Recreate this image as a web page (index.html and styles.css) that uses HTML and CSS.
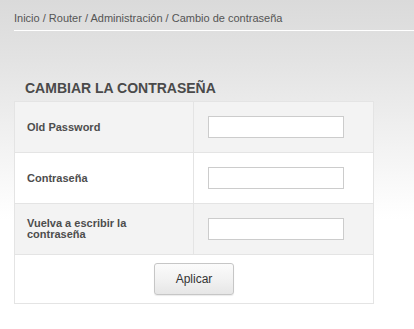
FILE: index.html
```html
<!DOCTYPE html>
<html lang="es">
<head>
<meta charset="utf-8">
<title>Cambio de contraseña</title>
<link rel="stylesheet" href="styles.css">
</head>
<body>
<div class="breadcrumb">Inicio / Router / Administración / Cambio de contraseña</div>
<main class="content">
  <h2 class="title">CAMBIAR LA CONTRASEÑA</h2>
  <form class="form-table">
    <div class="row alt">
      <label class="label" for="old">Old Password</label>
      <div class="field"><input id="old" type="password" class="input"></div>
    </div>
    <div class="row">
      <label class="label" for="new">Contraseña</label>
      <div class="field"><input id="new" type="password" class="input"></div>
    </div>
    <div class="row alt">
      <label class="label" for="rep"><span class="wrap">Vuelva a escribir la contraseña</span></label>
      <div class="field"><input id="rep" type="password" class="input"></div>
    </div>
    <div class="actions">
      <button type="button" class="btn">Aplicar</button>
    </div>
  </form>
</main>
</body>
</html>
```

FILE: styles.css
```css
html {
  background: #fff;
}
body {
  margin: 0;
  min-height: 329px;
  font-family: "Liberation Sans", Arial, sans-serif;
  background: linear-gradient(to bottom, #dadada 0px, #e3e3e3 60px, #fdfdfd 205px, #ffffff 220px) no-repeat;
  background-size: 100% 220px;
  background-color: #fff;
}
.breadcrumb {
  margin-left: 14px;
  padding: 10px 0 4px;
  font-size: 11px;
  line-height: 16px;
  color: #555;
  border-bottom: 1px solid #fff;
}
.content {
  margin-left: 14px;
  width: 360px;
}
.title {
  margin: 49px 0 4px 11px;
  font-size: 14px;
  line-height: 17px;
  font-weight: bold;
  color: #4a4a4a;
}
.form-table {
  border: 1px solid #e4e4e4;
  background: #fff;
}
.row {
  display: grid;
  grid-template-columns: 179px 1fr;
  height: 50px;
  border-bottom: 1px solid #e4e4e4;
  background: #fff;
}
.row.alt {
  background: #f3f3f3;
}
.label {
  display: flex;
  align-items: center;
  padding-left: 12px;
  border-right: 1px solid #e4e4e4;
  font-size: 11px;
  line-height: 11px;
  font-weight: bold;
  color: #4d4d4d;
}
.wrap {
  max-width: 125px;
}
.field {
  display: flex;
  align-items: center;
  padding-left: 14px;
}
.input {
  box-sizing: border-box;
  width: 136px;
  height: 22px;
  margin: 0;
  border: 1px solid #cccccc;
  background: #fff;
  padding: 2px 4px;
}
.actions {
  display: flex;
  justify-content: center;
  padding: 8px 0;
}
.btn {
  box-sizing: border-box;
  width: 80px;
  height: 32px;
  border: 1px solid #c6c6c6;
  border-radius: 3px;
  background: linear-gradient(to bottom, #fbfbfb 0%, #f2f2f2 50%, #e6e6e6 100%);
  box-shadow: 0 1px 1px rgba(0,0,0,0.08);
  font-family: "Liberation Sans", Arial, sans-serif;
  font-size: 12px;
  color: #333;
  padding: 0;
}
```
